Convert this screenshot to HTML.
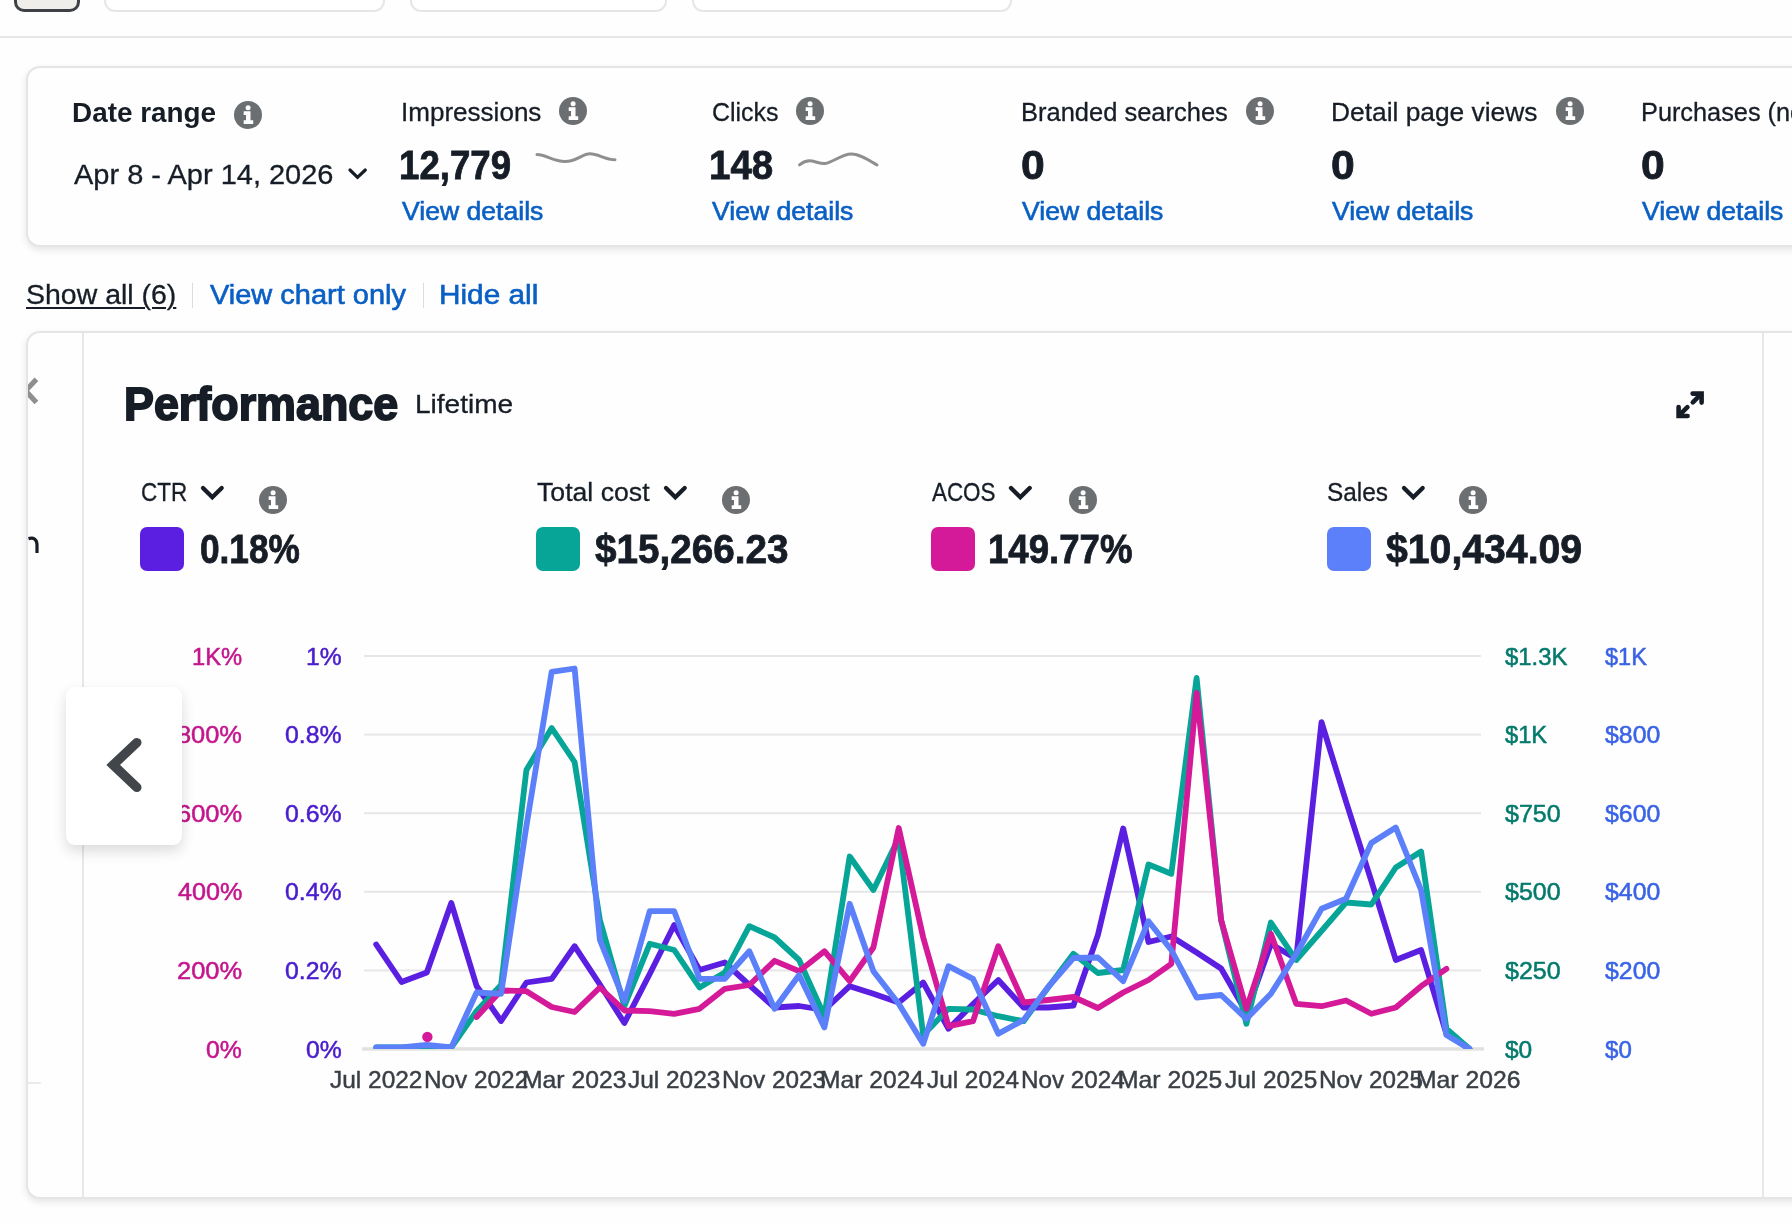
<!DOCTYPE html>
<html lang="en"><head><meta charset="utf-8"><title>Campaign performance</title>
<style>
html,body{margin:0;padding:0;width:1792px;height:1224px;overflow:hidden;background:#fefefe}
body{position:relative;font-family:"Liberation Sans",sans-serif}
.page{position:absolute;left:0;top:0;width:1792px;height:1224px;overflow:hidden;transform:translateZ(0);will-change:transform}
.a{position:absolute;display:block}
.t{position:absolute;white-space:nowrap;transform-origin:0 50%;font-family:"Liberation Sans",sans-serif}
.card{box-sizing:border-box;border:2px solid #e5e5e5;border-radius:14px;background:#fefefe;box-shadow:0 3px 7px rgba(0,0,0,.10)}
</style></head><body><div class="page">
<div class="a" style="left:14px;top:-21.2px;width:66px;height:33px;box-sizing:border-box;border:3px solid #3e4246;border-radius:10px;background:#efeeea"></div>
<div class="a" style="left:104px;top:-20px;width:281px;height:32px;box-sizing:border-box;border:2px solid #e6e6e6;border-radius:11px;background:#fff"></div>
<div class="a" style="left:410px;top:-20px;width:257px;height:32px;box-sizing:border-box;border:2px solid #e6e6e6;border-radius:11px;background:#fff"></div>
<div class="a" style="left:692px;top:-20px;width:320px;height:32px;box-sizing:border-box;border:2px solid #e6e6e6;border-radius:11px;background:#fff"></div>
<div class="a" style="left:0;top:36px;width:1792px;height:2px;background:#e6e6e6"></div>
<div class="a card" style="left:25.8px;top:66.4px;width:1800px;height:180.6px"></div>
<span class="t" style="left:72.36px;top:98.81px;font-size:27.4px;line-height:27.4px;color:#161d26;font-weight:700;transform:scaleX(1.0175);">Date range</span>
<svg class="a" style="left:233.00px;top:100.00px" width="30" height="30" viewBox="-15 -15 30 30"><circle r="14" fill="#6c6f71"/><circle cx="0.1" cy="-7.3" r="2.5" fill="#fff"/><path d="M-4.3-3.8H2.5V5.2H5.2V9H-4.3V5.2H-2V0H-4.3Z" fill="#fff"/></svg>
<span class="t" style="left:74.10px;top:160.72px;font-size:27.5px;line-height:27.5px;color:#161d26;-webkit-text-stroke:0.3px #161d26;transform:scaleX(1.0543);">Apr 8 - Apr 14, 2026</span>
<svg class="a" style="left:346.40px;top:165.60px" width="23.30" height="17.40" viewBox="346.40 165.60 23.30 17.40"><path d="M350.4 169.6L357.9 177L365.7 169.6" fill="none" stroke="#161d26" stroke-width="3.2" stroke-linecap="round" stroke-linejoin="miter"/></svg>
<span class="t" style="left:401.05px;top:100.14px;font-size:25.7px;line-height:25.7px;color:#161d26;-webkit-text-stroke:0.3px #161d26;transform:scaleX(1.0139);">Impressions</span>
<svg class="a" style="left:558.00px;top:95.75px" width="30" height="30" viewBox="-15 -15 30 30"><circle r="14" fill="#6c6f71"/><circle cx="0.1" cy="-7.3" r="2.5" fill="#fff"/><path d="M-4.3-3.8H2.5V5.2H5.2V9H-4.3V5.2H-2V0H-4.3Z" fill="#fff"/></svg>
<span class="t" style="left:399.49px;top:144.84px;font-size:40px;line-height:40px;color:#161d26;font-weight:700;-webkit-text-stroke:0.8px #161d26;transform:scaleX(0.9161);">12,779</span>
<span class="t" style="left:402.21px;top:198.88px;font-size:25.3px;line-height:25.3px;color:#0a5fc4;-webkit-text-stroke:0.6px #0a5fc4;transform:scaleX(1.0512);">View details</span>
<span class="t" style="left:712.20px;top:100.14px;font-size:25.7px;line-height:25.7px;color:#161d26;-webkit-text-stroke:0.3px #161d26;transform:scaleX(0.9710);">Clicks</span>
<svg class="a" style="left:795.00px;top:95.75px" width="30" height="30" viewBox="-15 -15 30 30"><circle r="14" fill="#6c6f71"/><circle cx="0.1" cy="-7.3" r="2.5" fill="#fff"/><path d="M-4.3-3.8H2.5V5.2H5.2V9H-4.3V5.2H-2V0H-4.3Z" fill="#fff"/></svg>
<span class="t" style="left:709.40px;top:144.84px;font-size:40px;line-height:40px;color:#161d26;font-weight:700;-webkit-text-stroke:0.8px #161d26;transform:scaleX(0.9633);">148</span>
<span class="t" style="left:712.21px;top:198.88px;font-size:25.3px;line-height:25.3px;color:#0a5fc4;-webkit-text-stroke:0.6px #0a5fc4;transform:scaleX(1.0512);">View details</span>
<span class="t" style="left:1021.36px;top:100.14px;font-size:25.7px;line-height:25.7px;color:#161d26;-webkit-text-stroke:0.3px #161d26;transform:scaleX(0.9920);">Branded searches</span>
<svg class="a" style="left:1245.00px;top:95.75px" width="30" height="30" viewBox="-15 -15 30 30"><circle r="14" fill="#6c6f71"/><circle cx="0.1" cy="-7.3" r="2.5" fill="#fff"/><path d="M-4.3-3.8H2.5V5.2H5.2V9H-4.3V5.2H-2V0H-4.3Z" fill="#fff"/></svg>
<span class="t" style="left:1021.16px;top:144.84px;font-size:40px;line-height:40px;color:#161d26;font-weight:700;-webkit-text-stroke:0.8px #161d26;transform:scaleX(1.0664);">0</span>
<span class="t" style="left:1022.21px;top:198.88px;font-size:25.3px;line-height:25.3px;color:#0a5fc4;-webkit-text-stroke:0.6px #0a5fc4;transform:scaleX(1.0512);">View details</span>
<span class="t" style="left:1331.29px;top:100.14px;font-size:25.7px;line-height:25.7px;color:#161d26;-webkit-text-stroke:0.3px #161d26;transform:scaleX(1.0253);">Detail page views</span>
<svg class="a" style="left:1554.50px;top:95.75px" width="30" height="30" viewBox="-15 -15 30 30"><circle r="14" fill="#6c6f71"/><circle cx="0.1" cy="-7.3" r="2.5" fill="#fff"/><path d="M-4.3-3.8H2.5V5.2H5.2V9H-4.3V5.2H-2V0H-4.3Z" fill="#fff"/></svg>
<span class="t" style="left:1331.16px;top:144.84px;font-size:40px;line-height:40px;color:#161d26;font-weight:700;-webkit-text-stroke:0.8px #161d26;transform:scaleX(1.0664);">0</span>
<span class="t" style="left:1332.21px;top:198.88px;font-size:25.3px;line-height:25.3px;color:#0a5fc4;-webkit-text-stroke:0.6px #0a5fc4;transform:scaleX(1.0512);">View details</span>
<span class="t" style="left:1641.37px;top:100.14px;font-size:25.7px;line-height:25.7px;color:#161d26;-webkit-text-stroke:0.3px #161d26;transform:scaleX(0.9850);">Purchases (new-to-brand)</span>
<span class="t" style="left:1641.16px;top:144.84px;font-size:40px;line-height:40px;color:#161d26;font-weight:700;-webkit-text-stroke:0.8px #161d26;transform:scaleX(1.0664);">0</span>
<span class="t" style="left:1642.21px;top:198.88px;font-size:25.3px;line-height:25.3px;color:#0a5fc4;-webkit-text-stroke:0.6px #0a5fc4;transform:scaleX(1.0512);">View details</span>
<svg class="a" style="left:520px;top:140px" width="380" height="40" viewBox="520 140 380 40"><path d="M537 154.5C546 154.5 553 161.5 565 161.5C577 161.5 582 153.8 590 153.8C598 153.8 605 159.5 615 159.8" fill="none" stroke="#8f8f8f" stroke-width="3" stroke-linecap="round"/><path d="M799.5 164.8C803 162 808 160.3 812 161C817 162 821 164 825 163.5C833 162.5 842 154 851 154C860 154 869 160 877 165" fill="none" stroke="#8f8f8f" stroke-width="3" stroke-linecap="round"/></svg>
<span class="t" style="left:26.08px;top:282.34px;font-size:27px;line-height:27px;color:#161d26;-webkit-text-stroke:0.3px #161d26;transform:scaleX(1.0545);text-decoration:underline;text-decoration-thickness:2px;text-underline-offset:3px;">Show all (6)</span>
<span class="t" style="left:209.71px;top:282.34px;font-size:27px;line-height:27px;color:#0a5fc4;-webkit-text-stroke:0.6px #0a5fc4;transform:scaleX(1.0735);">View chart only</span>
<span class="t" style="left:438.89px;top:282.34px;font-size:27px;line-height:27px;color:#0a5fc4;-webkit-text-stroke:0.6px #0a5fc4;transform:scaleX(1.1021);">Hide all</span>
<div class="a" style="left:191.5px;top:283px;width:1.5px;height:25px;background:#dcdcdc"></div>
<div class="a" style="left:422.5px;top:283px;width:1.5px;height:25px;background:#dcdcdc"></div>
<div class="a card" style="left:25.8px;top:331px;width:1800px;height:868.2px"></div>
<div class="a" style="left:82px;top:332.5px;width:2px;height:865px;background:#e8e8e8"></div>
<div class="a" style="left:1762px;top:332.5px;width:2px;height:865px;background:#e8e8e8"></div>
<svg class="a" style="left:28px;top:370px" width="20" height="200" viewBox="28 370 20 200"><path d="M36.4 379.2L25.6 390.8L36.4 402.4" fill="none" stroke="#8f8f8f" stroke-width="5.2"/><path d="M28.5 538.6C34 537.2 37 539.5 37 545V553" fill="none" stroke="#161d26" stroke-width="3.2"/></svg>
<div class="a" style="left:28px;top:1081.6px;width:13px;height:2.6px;background:#eaeaea;border-radius:0 1px 1px 0"></div>
<span class="t" style="left:124.13px;top:382.40px;font-size:45.6px;line-height:45.6px;color:#161d26;font-weight:700;-webkit-text-stroke:1.8px #161d26;transform:scaleX(0.9836);">Performance</span>
<span class="t" style="left:415.16px;top:390.59px;font-size:26px;line-height:26px;color:#161d26;-webkit-text-stroke:0.3px #161d26;transform:scaleX(1.0778);">Lifetime</span>
<svg class="a" style="left:1672px;top:387px" width="36" height="36" viewBox="1672 387 36 36"><g fill="none" stroke="#161d26" stroke-width="4.6" stroke-linecap="round" stroke-linejoin="miter"><path d="M1692.6 393.6H1701.6V402.6"/><path d="M1700.8 394.4L1692.8 402.4"/><path d="M1678.6 407V416H1687.6"/><path d="M1679.4 415.2L1687.4 407.2"/></g></svg>
<span class="t" style="left:140.96px;top:480.41px;font-size:25.5px;line-height:25.5px;color:#161d26;-webkit-text-stroke:0.3px #161d26;transform:scaleX(0.8805);">CTR</span>
<svg class="a" style="left:198.70px;top:483.70px" width="26.70" height="19.30" viewBox="198.70 483.70 26.70 19.30"><path d="M202.7 487.7L212.0 497L221.4 487.7" fill="none" stroke="#161d26" stroke-width="4.3" stroke-linecap="round" stroke-linejoin="miter"/></svg>
<svg class="a" style="left:258.00px;top:485.00px" width="30" height="30" viewBox="-15 -15 30 30"><circle r="14" fill="#6c6f71"/><circle cx="0.1" cy="-7.3" r="2.5" fill="#fff"/><path d="M-4.3-3.8H2.5V5.2H5.2V9H-4.3V5.2H-2V0H-4.3Z" fill="#fff"/></svg>
<div class="a" style="left:140px;top:527px;width:44px;height:44px;border-radius:7px;background:#5a1fe0"></div>
<span class="t" style="left:199.78px;top:529.34px;font-size:40px;line-height:40px;color:#161d26;font-weight:700;-webkit-text-stroke:0.8px #161d26;transform:scaleX(0.8804);">0.18%</span>
<span class="t" style="left:536.67px;top:480.41px;font-size:25.5px;line-height:25.5px;color:#161d26;-webkit-text-stroke:0.3px #161d26;transform:scaleX(1.0450);">Total cost</span>
<svg class="a" style="left:661.70px;top:483.70px" width="26.70" height="19.30" viewBox="661.70 483.70 26.70 19.30"><path d="M665.7 487.7L675.0 497L684.4 487.7" fill="none" stroke="#161d26" stroke-width="4.3" stroke-linecap="round" stroke-linejoin="miter"/></svg>
<svg class="a" style="left:721.00px;top:485.00px" width="30" height="30" viewBox="-15 -15 30 30"><circle r="14" fill="#6c6f71"/><circle cx="0.1" cy="-7.3" r="2.5" fill="#fff"/><path d="M-4.3-3.8H2.5V5.2H5.2V9H-4.3V5.2H-2V0H-4.3Z" fill="#fff"/></svg>
<div class="a" style="left:536px;top:527px;width:44px;height:44px;border-radius:7px;background:#06a598"></div>
<span class="t" style="left:595.08px;top:529.34px;font-size:40px;line-height:40px;color:#161d26;font-weight:700;-webkit-text-stroke:0.8px #161d26;transform:scaleX(0.9669);">$15,266.23</span>
<span class="t" style="left:932.19px;top:480.41px;font-size:25.5px;line-height:25.5px;color:#161d26;-webkit-text-stroke:0.3px #161d26;transform:scaleX(0.8785);">ACOS</span>
<svg class="a" style="left:1007.30px;top:483.70px" width="26.70" height="19.30" viewBox="1007.30 483.70 26.70 19.30"><path d="M1011.3000000000001 487.7L1020.6 497L1030.0 487.7" fill="none" stroke="#161d26" stroke-width="4.3" stroke-linecap="round" stroke-linejoin="miter"/></svg>
<svg class="a" style="left:1068.00px;top:485.00px" width="30" height="30" viewBox="-15 -15 30 30"><circle r="14" fill="#6c6f71"/><circle cx="0.1" cy="-7.3" r="2.5" fill="#fff"/><path d="M-4.3-3.8H2.5V5.2H5.2V9H-4.3V5.2H-2V0H-4.3Z" fill="#fff"/></svg>
<div class="a" style="left:931px;top:527px;width:44px;height:44px;border-radius:7px;background:#d41a98"></div>
<span class="t" style="left:987.90px;top:529.34px;font-size:40px;line-height:40px;color:#161d26;font-weight:700;-webkit-text-stroke:0.8px #161d26;transform:scaleX(0.9149);">149.77%</span>
<span class="t" style="left:1326.75px;top:480.41px;font-size:25.5px;line-height:25.5px;color:#161d26;-webkit-text-stroke:0.3px #161d26;transform:scaleX(0.9563);">Sales</span>
<svg class="a" style="left:1399.50px;top:483.70px" width="26.70" height="19.30" viewBox="1399.50 483.70 26.70 19.30"><path d="M1403.5 487.7L1412.8 497L1422.2 487.7" fill="none" stroke="#161d26" stroke-width="4.3" stroke-linecap="round" stroke-linejoin="miter"/></svg>
<svg class="a" style="left:1457.50px;top:485.00px" width="30" height="30" viewBox="-15 -15 30 30"><circle r="14" fill="#6c6f71"/><circle cx="0.1" cy="-7.3" r="2.5" fill="#fff"/><path d="M-4.3-3.8H2.5V5.2H5.2V9H-4.3V5.2H-2V0H-4.3Z" fill="#fff"/></svg>
<div class="a" style="left:1327px;top:527px;width:44px;height:44px;border-radius:7px;background:#5b80fa"></div>
<span class="t" style="left:1386.08px;top:529.34px;font-size:40px;line-height:40px;color:#161d26;font-weight:700;-webkit-text-stroke:0.8px #161d26;transform:scaleX(0.9797);">$10,434.09</span>
<svg class="a" style="left:0;top:620px" width="1792" height="480" viewBox="0 620 1792 480"><defs><clipPath id="pc"><rect x="350" y="620" width="1150" height="428.9"/></clipPath></defs><rect x="364" y="655.0" width="1117" height="2" fill="#e7e7e7"/><rect x="364" y="733.6" width="1117" height="2" fill="#e7e7e7"/><rect x="364" y="812.2" width="1117" height="2" fill="#e7e7e7"/><rect x="364" y="890.8" width="1117" height="2" fill="#e7e7e7"/><rect x="364" y="969.4" width="1117" height="2" fill="#e7e7e7"/><rect x="362" y="1047.2" width="1122" height="3.5" fill="#e1e1df"/><polyline points="376.2,944.5 401.5,982.0 426.8,972.5 451.3,903.0 476.6,986.0 501.1,1021.0 526.4,982.5 551.7,978.8 574.6,946.2 599.9,984.5 624.4,1023.0 649.7,974.0 674.2,925.0 699.5,970.0 724.8,962.5 749.3,985.0 774.6,1007.5 799.1,1006.0 824.4,1010.0 849.7,986.2 873.4,993.8 898.7,1002.5 923.2,982.5 948.5,1028.8 973.0,1004.0 998.3,980.0 1023.6,1007.5 1048.1,1007.5 1073.4,1005.5 1097.9,935.0 1123.2,828.5 1148.5,942.0 1171.3,936.5 1196.6,952.5 1221.1,968.5 1246.4,1012.5 1270.9,944.0 1296.2,958.8 1321.5,722.2 1346.0,801.5 1371.3,880.8 1395.8,960.0 1421.1,950.0 1446.4,1033.8 1469.3,1048.8" fill="none" stroke="#5a1fe0" stroke-width="5.8" stroke-linecap="round" stroke-linejoin="round" clip-path="url(#pc)"/><polyline points="376.2,1047.5 401.5,1047.5 426.8,1046.5 451.3,1047.5 476.6,1011.0 501.1,985.0 526.4,770.0 551.7,728.0 574.6,762.0 599.9,920.0 624.4,1006.0 649.7,943.8 674.2,950.0 699.5,987.5 724.8,972.5 749.3,926.2 774.6,937.5 799.1,960.0 824.4,1016.0 849.7,856.5 873.4,890.0 898.7,838.0 923.2,1035.0 948.5,1008.8 973.0,1009.5 998.3,1016.2 1023.6,1021.2 1048.1,987.5 1073.4,953.8 1097.9,973.0 1123.2,970.0 1148.5,864.5 1171.3,873.8 1196.6,678.0 1221.1,920.0 1246.4,1023.8 1270.9,922.5 1296.2,960.0 1321.5,931.0 1346.0,902.5 1371.3,904.5 1395.8,867.5 1421.1,851.5 1446.4,1028.8 1469.3,1048.8" fill="none" stroke="#06a598" stroke-width="5.8" stroke-linecap="round" stroke-linejoin="round" clip-path="url(#pc)"/><circle cx="427.4" cy="1036.9" r="5.2" fill="#d41a98"/><polyline points="476.6,1017.0 501.1,990.5 526.4,991.2 551.7,1007.0 574.6,1012.0 599.9,987.5 624.4,1010.5 649.7,1011.2 674.2,1013.8 699.5,1008.8 724.8,988.8 749.3,985.0 774.6,960.8 799.1,971.2 824.4,951.2 849.7,981.2 873.4,947.5 898.7,828.0 923.2,937.5 948.5,1026.2 973.0,1021.2 998.3,946.2 1023.6,1002.5 1048.1,1000.0 1073.4,997.0 1097.9,1008.0 1123.2,992.5 1148.5,980.0 1171.3,963.8 1196.6,693.0 1221.1,920.0 1246.4,1008.8 1270.9,933.8 1296.2,1003.8 1321.5,1006.2 1346.0,1000.5 1371.3,1013.8 1395.8,1007.5 1421.1,986.2 1446.4,968.8" fill="none" stroke="#d41a98" stroke-width="5.8" stroke-linecap="round" stroke-linejoin="round" clip-path="url(#pc)"/><polyline points="376.2,1047.5 401.5,1047.5 426.8,1045.0 451.3,1047.5 476.6,992.5 501.1,993.8 526.4,826.0 551.7,671.8 574.6,668.5 599.9,940.0 624.4,1001.0 649.7,911.2 674.2,911.2 699.5,978.8 724.8,978.8 749.3,951.2 774.6,1008.8 799.1,975.0 824.4,1027.5 849.7,903.8 873.4,971.2 898.7,1003.8 923.2,1043.8 948.5,966.2 973.0,978.8 998.3,1033.8 1023.6,1020.0 1048.1,987.0 1073.4,958.0 1097.9,957.5 1123.2,981.2 1148.5,921.2 1171.3,950.0 1196.6,997.5 1221.1,995.0 1246.4,1018.8 1270.9,993.8 1296.2,954.0 1321.5,908.8 1346.0,898.8 1371.3,843.0 1395.8,827.5 1421.1,890.0 1446.4,1035.0 1469.3,1048.8" fill="none" stroke="#5b80fa" stroke-width="5.8" stroke-linecap="round" stroke-linejoin="round" clip-path="url(#pc)"/></svg>
<span class="t" style="left:191.85px;top:645.59px;font-size:23.4px;line-height:23.4px;color:#c4168c;-webkit-text-stroke:0.5px #c4168c;transform:scaleX(1.0143);">1K%</span>
<span class="t" style="left:306.39px;top:645.59px;font-size:23.4px;line-height:23.4px;color:#4a1ccd;-webkit-text-stroke:0.5px #4a1ccd;transform:scaleX(1.0531);">1%</span>
<span class="t" style="left:1504.82px;top:645.59px;font-size:23.4px;line-height:23.4px;color:#047a6c;-webkit-text-stroke:0.5px #047a6c;transform:scaleX(1.0220);">$1.3K</span>
<span class="t" style="left:1605.02px;top:645.59px;font-size:23.4px;line-height:23.4px;color:#3a63e6;-webkit-text-stroke:0.5px #3a63e6;transform:scaleX(1.0063);">$1K</span>
<span class="t" style="left:177.08px;top:724.19px;font-size:23.4px;line-height:23.4px;color:#c4168c;-webkit-text-stroke:0.5px #c4168c;transform:scaleX(1.0853);">800%</span>
<span class="t" style="left:285.40px;top:724.19px;font-size:23.4px;line-height:23.4px;color:#4a1ccd;-webkit-text-stroke:0.5px #4a1ccd;transform:scaleX(1.0615);">0.8%</span>
<span class="t" style="left:1504.82px;top:724.19px;font-size:23.4px;line-height:23.4px;color:#047a6c;-webkit-text-stroke:0.5px #047a6c;transform:scaleX(1.0135);">$1K</span>
<span class="t" style="left:1605.02px;top:724.19px;font-size:23.4px;line-height:23.4px;color:#3a63e6;-webkit-text-stroke:0.5px #3a63e6;transform:scaleX(1.0619);">$800</span>
<span class="t" style="left:176.90px;top:802.79px;font-size:23.4px;line-height:23.4px;color:#c4168c;-webkit-text-stroke:0.5px #c4168c;transform:scaleX(1.0884);">600%</span>
<span class="t" style="left:285.40px;top:802.79px;font-size:23.4px;line-height:23.4px;color:#4a1ccd;-webkit-text-stroke:0.5px #4a1ccd;transform:scaleX(1.0615);">0.6%</span>
<span class="t" style="left:1504.82px;top:802.79px;font-size:23.4px;line-height:23.4px;color:#047a6c;-webkit-text-stroke:0.5px #047a6c;transform:scaleX(1.0697);">$750</span>
<span class="t" style="left:1605.02px;top:802.79px;font-size:23.4px;line-height:23.4px;color:#3a63e6;-webkit-text-stroke:0.5px #3a63e6;transform:scaleX(1.0619);">$600</span>
<span class="t" style="left:177.62px;top:881.39px;font-size:23.4px;line-height:23.4px;color:#c4168c;-webkit-text-stroke:0.5px #c4168c;transform:scaleX(1.0763);">400%</span>
<span class="t" style="left:285.40px;top:881.39px;font-size:23.4px;line-height:23.4px;color:#4a1ccd;-webkit-text-stroke:0.5px #4a1ccd;transform:scaleX(1.0615);">0.4%</span>
<span class="t" style="left:1504.82px;top:881.39px;font-size:23.4px;line-height:23.4px;color:#047a6c;-webkit-text-stroke:0.5px #047a6c;transform:scaleX(1.0697);">$500</span>
<span class="t" style="left:1605.02px;top:881.39px;font-size:23.4px;line-height:23.4px;color:#3a63e6;-webkit-text-stroke:0.5px #3a63e6;transform:scaleX(1.0619);">$400</span>
<span class="t" style="left:176.90px;top:959.99px;font-size:23.4px;line-height:23.4px;color:#c4168c;-webkit-text-stroke:0.5px #c4168c;transform:scaleX(1.0884);">200%</span>
<span class="t" style="left:285.40px;top:959.99px;font-size:23.4px;line-height:23.4px;color:#4a1ccd;-webkit-text-stroke:0.5px #4a1ccd;transform:scaleX(1.0615);">0.2%</span>
<span class="t" style="left:1504.82px;top:959.99px;font-size:23.4px;line-height:23.4px;color:#047a6c;-webkit-text-stroke:0.5px #047a6c;transform:scaleX(1.0697);">$250</span>
<span class="t" style="left:1605.02px;top:959.99px;font-size:23.4px;line-height:23.4px;color:#3a63e6;-webkit-text-stroke:0.5px #3a63e6;transform:scaleX(1.0619);">$200</span>
<span class="t" style="left:206.20px;top:1038.59px;font-size:23.4px;line-height:23.4px;color:#c4168c;-webkit-text-stroke:0.5px #c4168c;transform:scaleX(1.0589);">0%</span>
<span class="t" style="left:306.20px;top:1038.59px;font-size:23.4px;line-height:23.4px;color:#4a1ccd;-webkit-text-stroke:0.5px #4a1ccd;transform:scaleX(1.0589);">0%</span>
<span class="t" style="left:1504.82px;top:1038.59px;font-size:23.4px;line-height:23.4px;color:#047a6c;-webkit-text-stroke:0.5px #047a6c;transform:scaleX(1.0473);">$0</span>
<span class="t" style="left:1605.02px;top:1038.59px;font-size:23.4px;line-height:23.4px;color:#3a63e6;-webkit-text-stroke:0.5px #3a63e6;transform:scaleX(1.0316);">$0</span>
<span class="t" style="left:330.07px;top:1068.99px;font-size:23.4px;line-height:23.4px;color:#3a3f45;-webkit-text-stroke:0.45px #3a3f45;transform:scaleX(1.0457);">Jul 2022</span>
<span class="t" style="left:423.80px;top:1068.99px;font-size:23.4px;line-height:23.4px;color:#3a3f45;-webkit-text-stroke:0.45px #3a3f45;transform:scaleX(1.0406);">Nov 2022</span>
<span class="t" style="left:521.59px;top:1068.99px;font-size:23.4px;line-height:23.4px;color:#3a3f45;-webkit-text-stroke:0.45px #3a3f45;transform:scaleX(1.0564);">Mar 2023</span>
<span class="t" style="left:628.04px;top:1068.99px;font-size:23.4px;line-height:23.4px;color:#3a3f45;-webkit-text-stroke:0.45px #3a3f45;transform:scaleX(1.0438);">Jul 2023</span>
<span class="t" style="left:721.77px;top:1068.99px;font-size:23.4px;line-height:23.4px;color:#3a3f45;-webkit-text-stroke:0.45px #3a3f45;transform:scaleX(1.0389);">Nov 2023</span>
<span class="t" style="left:820.38px;top:1068.99px;font-size:23.4px;line-height:23.4px;color:#3a3f45;-webkit-text-stroke:0.45px #3a3f45;transform:scaleX(1.0528);">Mar 2024</span>
<span class="t" style="left:926.82px;top:1068.99px;font-size:23.4px;line-height:23.4px;color:#3a3f45;-webkit-text-stroke:0.45px #3a3f45;transform:scaleX(1.0399);">Jul 2024</span>
<span class="t" style="left:1020.56px;top:1068.99px;font-size:23.4px;line-height:23.4px;color:#3a3f45;-webkit-text-stroke:0.45px #3a3f45;transform:scaleX(1.0354);">Nov 2024</span>
<span class="t" style="left:1118.34px;top:1068.99px;font-size:23.4px;line-height:23.4px;color:#3a3f45;-webkit-text-stroke:0.45px #3a3f45;transform:scaleX(1.0559);">Mar 2025</span>
<span class="t" style="left:1224.79px;top:1068.99px;font-size:23.4px;line-height:23.4px;color:#3a3f45;-webkit-text-stroke:0.45px #3a3f45;transform:scaleX(1.0432);">Jul 2025</span>
<span class="t" style="left:1318.53px;top:1068.99px;font-size:23.4px;line-height:23.4px;color:#3a3f45;-webkit-text-stroke:0.45px #3a3f45;transform:scaleX(1.0384);">Nov 2025</span>
<span class="t" style="left:1416.31px;top:1068.99px;font-size:23.4px;line-height:23.4px;color:#3a3f45;-webkit-text-stroke:0.45px #3a3f45;transform:scaleX(1.0564);">Mar 2026</span>
<div class="a" style="left:66px;top:687px;width:116px;height:158px;border-radius:9px;background:#fff;box-shadow:0 6px 14px rgba(0,0,0,.14)"></div>
<svg class="a" style="left:96px;top:730px" width="56" height="70" viewBox="96 730 56 70"><path d="M136.8 742.6L113.2 764.9L136.8 787.4" fill="none" stroke="#42464a" stroke-width="9.4" stroke-linecap="round" stroke-linejoin="miter"/></svg>
</div></body></html>
